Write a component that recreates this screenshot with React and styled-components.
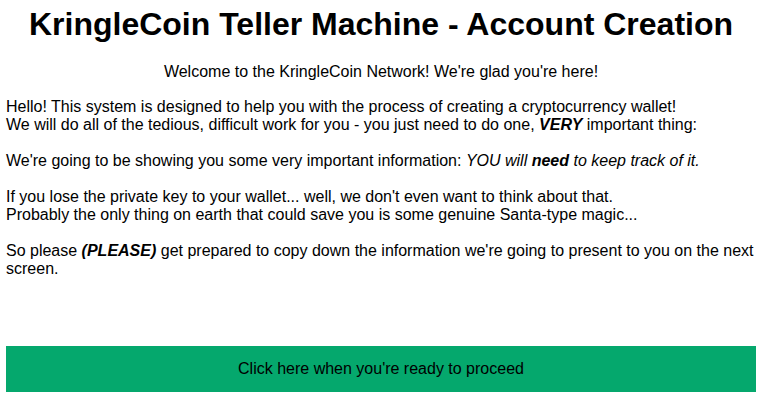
import React from "react";
import styled, { createGlobalStyle } from "styled-components";

const GlobalStyle = createGlobalStyle`
  html, body {
    margin: 0;
    padding: 0;
    background: #ffffff;
  }
  body {
    font-family: "Liberation Sans", Arial, sans-serif;
    color: #000000;
  }
`;

export default function App() {
  return (
    <Page>
      <GlobalStyle />
      <Title>KringleCoin Teller Machine - Account Creation</Title>
      <Welcome>Welcome to the KringleCoin Network! We're glad you're here!</Welcome>
      <Body>
        <Para>
          Hello! This system is designed to help you with the process of creating a cryptocurrency wallet!
          <br />
          We will do all of the tedious, difficult work for you - you just need to do one, <b><i>VERY</i></b> important thing:
        </Para>
        <Para>
          We're going to be showing you some very important information: <i>YOU will <b>need</b> to keep track of it.</i>
        </Para>
        <Para>
          If you lose the private key to your wallet... well, we don't even want to think about that.
          <br />
          Probably the only thing on earth that could save you is some genuine Santa-type magic...
        </Para>
        <Para>
          So please <b><i>(PLEASE)</i></b> get prepared to copy down the information we're going to present to you on the next screen.
        </Para>
      </Body>
      <ProceedButton type="button">Click here when you're ready to proceed</ProceedButton>
    </Page>
  );
}

const Page = styled.div`
  display: flex;
  flex-direction: column;
  padding: 6px 10px 0 6px;
  font-size: 16px;
  line-height: 18px;
`;

const Title = styled.h1`
  margin: 0;
  text-align: center;
  font-size: 32px;
  line-height: 37px;
  font-weight: bold;
`;

const Welcome = styled.div`
  margin-top: 20px;
  text-align: center;
`;

const Body = styled.div`
  margin-top: 17px;
  display: flex;
  flex-direction: column;
  gap: 18px;
`;

const Para = styled.div``;

const ProceedButton = styled.button`
  margin-top: 68px;
  height: 46px;
  width: 750px;
  border: none;
  background: #05a86d;
  color: #000000;
  font-family: "Liberation Sans", Arial, sans-serif;
  font-size: 16px;
  padding: 0;
  cursor: pointer;
`;
